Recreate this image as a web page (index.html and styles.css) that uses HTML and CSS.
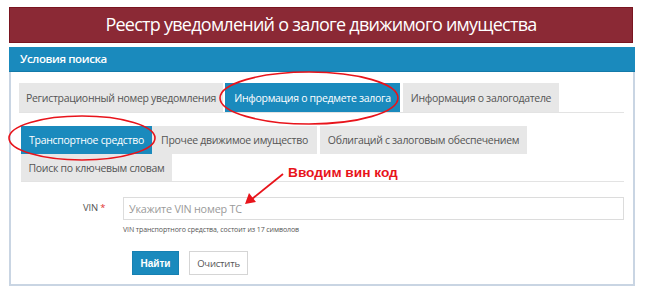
FILE: index.html
```html
<!DOCTYPE html>
<html lang="ru">
<head>
<meta charset="utf-8">
<link rel="stylesheet" href="styles.css">
</head>
<body>
<div class="page">
  <header class="title">Реестр уведомлений о залоге движимого имущества</header>
  <section class="panel">
    <div class="panel-head">Условия поиска</div>
    <div class="panel-body">
      <div class="tabs tabs-main">
        <div class="tab t1">Регистрационный номер уведомления</div>
        <div class="tab active t2">Информация о предмете залога</div>
        <div class="tab t3">Информация о залогодателе</div>
      </div>
      <div class="subtabs-wrap">
        <div class="tabs tabs-sub">
          <div class="tab active s1">Транспортное средство</div>
          <div class="tab s2">Прочее движимое имущество</div>
          <div class="tab s3">Облигаций с залоговым обеспечением</div>
          <div class="tab s4">Поиск по ключевым словам</div>
        </div>
      </div>
      <div class="form-row">
        <label class="label">VIN <span class="req">*</span></label>
        <div class="field">
          <input class="input" type="text" placeholder="Укажите VIN номер ТС">
          <div class="help">VIN транспортного средства, состоит из 17 символов</div>
        </div>
      </div>
      <div class="buttons">
        <button class="btn btn-primary">Найти</button>
        <button class="btn btn-default">Очистить</button>
      </div>
    </div>
  </section>
  <div class="note">Вводим вин код</div>
  <svg class="marks" width="650" height="301" viewBox="0 0 650 301">
    <ellipse cx="309" cy="98" rx="89" ry="26" fill="none" stroke="#e8141b" stroke-width="1.6"/>
    <ellipse cx="82" cy="138" rx="73" ry="22" fill="none" stroke="#e8141b" stroke-width="1.6"/>
    <line x1="283" y1="174" x2="252" y2="199" stroke="#e8141b" stroke-width="1.8"/>
    <polygon points="245,204 249,193 256,202" fill="#e8141b"/>
  </svg>
</div>
</body>
</html>
```
FILE: styles.css
```css
* { box-sizing: border-box; }
html, body { margin: 0; padding: 0; background: #fff; }
body { font-family: "Open Sans", "Noto Sans", sans-serif; color: #555; }
.page { position: relative; width: 650px; height: 301px; padding: 7px 15px 0 9px; }

.title {
  width: 624px;
  height: 36px;
  background: #8b2935;
  border: 1px solid #7a1520;
  color: #fff;
  font-size: 18px;
  line-height: 32px;
  text-align: center;
  letter-spacing: -0.75px;
}

.panel {
  margin-top: 4px;
  width: 626px;
  border: 2px solid #c9d5e3;
  border-top: 0;
  height: 239px;
}
.panel-head {
  margin: 0 -2px;
  height: 25px;
  background: #1a8abd;
  border-bottom: 1px solid #137aa9;
  color: #fff;
  font-size: 11.5px;
  font-weight: 600;
  letter-spacing: -0.4px;
  line-height: 24px;
  padding-left: 11px;
}
.panel-body { padding: 11px 9px 0 8px; }

.tabs { display: flex; flex-wrap: wrap; border-bottom: 1px solid #e3e3e3; }
.tab {
  background: #e7e7e7;
  color: #555;
  font-size: 10.5px;
  letter-spacing: -0.3px;
  white-space: nowrap;
  display: flex;
  align-items: center;
  padding: 0 8px;
}
.tab.active { background: #1a8abd; color: #fff; }

.tabs-main .tab { height: 29px; }
.t1 { width: 204px; justify-content: center; }
.t2 { width: 175px; margin-left: 2px; justify-content: center; }
.t3 { width: 156px; margin-left: 3px; justify-content: center; }

.subtabs-wrap { padding: 13px 0 0 2px; }
.tabs-sub { border-bottom-color: #e3e3e3; }
.tabs-sub .tab { height: 28px; justify-content: center; }
.s1 { width: 131px; }
.s2 { width: 165px; }
.s3 { width: 207px; margin-left: 3px; }
.s4 { width: 151px; height: 27px !important; }

.form-row { display: flex; margin-top: 15px; }
.label {
  width: 104px;
  padding-left: 64px;
  font-size: 9.5px;
  letter-spacing: -0.2px;
  color: #555;
  line-height: 22px;
}
.req { color: #e0312f; }
.field { flex: 1; }
.input {
  display: block;
  width: 501px;
  height: 23px;
  border: 1px solid #dcdcdc;
  padding: 0 5px;
  font-family: "Open Sans", sans-serif;
  font-size: 10.8px;
  letter-spacing: -0.2px;
  color: #555;
  outline: none;
}
.input::placeholder { color: #9a9a9a; }
.help { font-size: 7px; letter-spacing: -0.1px; color: #555; margin-top: 5px; }

.buttons { display: flex; gap: 10px; margin: 17px 0 0 113px; }
.btn {
  height: 24px;
  font-size: 10px;
  padding: 0;
  margin: 0;
  cursor: pointer;
}
.btn-primary {
  width: 47px;
  background: #1a8abd;
  border: 1px solid #1680b2;
  color: #fff;
  font-family: "Liberation Sans", Arial, sans-serif;
  font-weight: bold;
}
.btn-default {
  width: 59px;
  background: #fff;
  border: 1px solid #d5d5d5;
  color: #555;
  font-family: "Open Sans", sans-serif;
  font-size: 9.5px;
  letter-spacing: -0.2px;
}

.note {
  position: absolute;
  left: 288px;
  top: 165px;
  font-family: "Liberation Sans", Arial, sans-serif;
  font-weight: bold;
  font-size: 13.7px;
  color: #e8141b;
}
.marks { position: absolute; left: 0; top: 0; pointer-events: none; }
```
